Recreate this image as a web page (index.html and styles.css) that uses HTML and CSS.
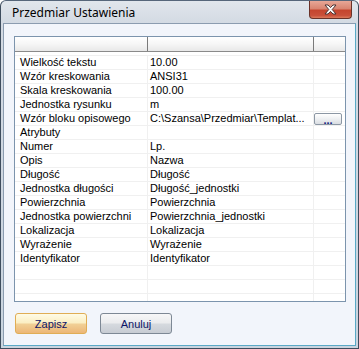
FILE: index.html
```html
<!DOCTYPE html>
<html lang="pl">

<head>
  <meta charset="UTF-8">
  <title>Przedmiar Ustawienia</title>
  <link rel="stylesheet" href="styles.css">
</head>

<body>
  <div class="window">
    <!-- Title bar -->
    <div class="titlebar">
      <span class="title">Przedmiar Ustawienia</span>
      <button class="close-btn">
        <svg width="13" height="11" viewBox="0 0 13 11">
          <path d="M1 1L4 1L6.5 3.6L9 1L12 1L8.2 5.5L12 10L9 10L6.5 7.4L4 10L1 10L4.8 5.5Z"
            fill="#ffffff" stroke="#4a3434" stroke-width="1" stroke-linejoin="round" />
        </svg>
      </button>
    </div>

    <!-- Client area -->
    <div class="client">
      <div class="grid">
        <div class="grid-header">
          <div class="hcell"></div>
          <div class="hcell"></div>
          <div class="hcell"></div>
        </div>
        <div class="grid-body">
          <div class="row"><div class="cell label">Wielkość tekstu</div><div class="cell value">10.00</div><div class="cell"></div></div>
          <div class="row"><div class="cell label">Wzór kreskowania</div><div class="cell value">ANSI31</div><div class="cell"></div></div>
          <div class="row"><div class="cell label">Skala kreskowania</div><div class="cell value">100.00</div><div class="cell"></div></div>
          <div class="row"><div class="cell label">Jednostka rysunku</div><div class="cell value">m</div><div class="cell"></div></div>
          <div class="row"><div class="cell label">Wzór bloku opisowego</div><div class="cell value">C:\Szansa\Przedmiar\Templat...</div><div class="cell btn-cell"><button class="dots-btn">...</button></div></div>
          <div class="row"><div class="cell label">Atrybuty</div><div class="cell value"></div><div class="cell"></div></div>
          <div class="row"><div class="cell label">Numer</div><div class="cell value">Lp.</div><div class="cell"></div></div>
          <div class="row"><div class="cell label">Opis</div><div class="cell value">Nazwa</div><div class="cell"></div></div>
          <div class="row"><div class="cell label">Długość</div><div class="cell value">Długość</div><div class="cell"></div></div>
          <div class="row"><div class="cell label">Jednostka długości</div><div class="cell value">Długość_jednostki</div><div class="cell"></div></div>
          <div class="row"><div class="cell label">Powierzchnia</div><div class="cell value">Powierzchnia</div><div class="cell"></div></div>
          <div class="row"><div class="cell label">Jednostka powierzchni</div><div class="cell value">Powierzchnia_jednostki</div><div class="cell"></div></div>
          <div class="row"><div class="cell label">Lokalizacja</div><div class="cell value">Lokalizacja</div><div class="cell"></div></div>
          <div class="row"><div class="cell label">Wyrażenie</div><div class="cell value">Wyrażenie</div><div class="cell"></div></div>
          <div class="row"><div class="cell label">Identyfikator</div><div class="cell value">Identyfikator</div><div class="cell"></div></div>
          <div class="row"><div class="cell label"></div><div class="cell value"></div><div class="cell"></div></div>
          <div class="row"><div class="cell label"></div><div class="cell value"></div><div class="cell"></div></div>
          <div class="row"><div class="cell label"></div><div class="cell value"></div><div class="cell"></div></div>
        </div>
      </div>

      <div class="actions">
        <button class="btn btn-save">Zapisz</button>
        <button class="btn btn-cancel">Anuluj</button>
      </div>
    </div>
  </div>
</body>

</html>
```

FILE: styles.css
```css
* {
  margin: 0;
  padding: 0;
  box-sizing: border-box;
}

body {
  background-color: #ffffff;
  font-family: 'Liberation Sans', Arial, sans-serif;
  font-size: 11px;
  color: #000000;
}

.window {
  width: 359px;
  height: 349px;
  display: flex;
  flex-direction: column;
  border: 1px solid #3e4d5e;
  border-top-color: #56667a;
  border-radius: 6px 6px 0 0;
  background: linear-gradient(to bottom, #e1e6ec 0px, #d3dae3 22px, #c9d4df 100%);
  padding: 0 2px 2px 2px;
}

.titlebar {
  height: 22px;
  display: flex;
  align-items: flex-start;
  padding-left: 9px;
}

.title {
  font-family: 'Noto Sans', 'Liberation Sans', sans-serif;
  font-size: 12px;
  color: #000000;
  padding-top: 3px;
  line-height: 18px;
}

.close-btn {
  margin-left: auto;
  margin-right: 4px;
  width: 43px;
  height: 18px;
  display: flex;
  justify-content: center;
  align-items: center;
  border: 1px solid #6a3228;
  border-top: none;
  border-radius: 0 0 4px 4px;
  background: linear-gradient(to bottom, #e8a797 0%, #d98571 45%, #c5452e 55%, #c9503a 85%, #dc7a5c 100%);
}

.client {
  flex: 1;
  display: flex;
  flex-direction: column;
  background-color: #f2f5fb;
  border: 1px solid #8b9cb0;
  border-right-color: #5aa9c6;
  border-bottom-color: #5aa9c6;
  padding: 12px 9px 11px 10px;
}

.grid {
  height: 266px;
  display: flex;
  flex-direction: column;
  background-color: #ffffff;
  border: 1px solid #7c94ad;
  overflow: hidden;
}

.grid-header {
  height: 15px;
  display: grid;
  grid-template-columns: 133px 166px 31px;
  background: linear-gradient(to bottom, #ffffff 0%, #f6f6f6 50%, #e8e8e8 100%);
  border-bottom: 1px solid #8a8a8a;
}

.hcell {
  border-right: 1px solid #7a7a7a;
}

.hcell:last-child {
  border-right: none;
}

.grid-body {
  flex: 1;
  padding-top: 3px;
  overflow: hidden;
}

.row {
  height: 14px;
  display: grid;
  grid-template-columns: 133px 166px 31px;
  border-top: 1px solid #f0f0f0;
}

.cell {
  border-right: 1px solid #f0f0f0;
  line-height: 13px;
  white-space: nowrap;
  overflow: hidden;
}

.cell:last-child {
  border-right: none;
}

.label {
  padding-left: 5px;
}

.value {
  padding-left: 2px;
}

.btn-cell {
  display: flex;
  align-items: flex-start;
}

.dots-btn {
  width: 28px;
  height: 12px;
  margin-top: 1px;
  border: 1px solid #8c97a4;
  border-radius: 2px;
  background: linear-gradient(to bottom, #ffffff 0%, #eef0f2 50%, #d9dde2 100%);
  font-family: 'Liberation Sans', Arial, sans-serif;
  font-size: 11px;
  font-weight: bold;
  line-height: 6px;
  color: #10207a;
  display: flex;
  justify-content: center;
  align-items: flex-end;
  padding-bottom: 1px;
}

.actions {
  display: flex;
  gap: 13px;
  margin-top: 11px;
  padding-left: 1px;
}

.btn {
  width: 72px;
  height: 21px;
  border-radius: 3px;
  font-family: 'Liberation Sans', Arial, sans-serif;
  font-size: 11px;
  color: #0d1466;
}

.btn-save {
  border: 1px solid #e0ad55;
  background: linear-gradient(to bottom, #fffbe6 0%, #fbefc4 45%, #f1cf95 55%, #ecb676 100%);
}

.btn-cancel {
  border: 1px solid #7d8895;
  background: linear-gradient(to bottom, #f7f7f8 0%, #ebecee 45%, #d5d9de 55%, #c7ccd3 100%);
}
```
